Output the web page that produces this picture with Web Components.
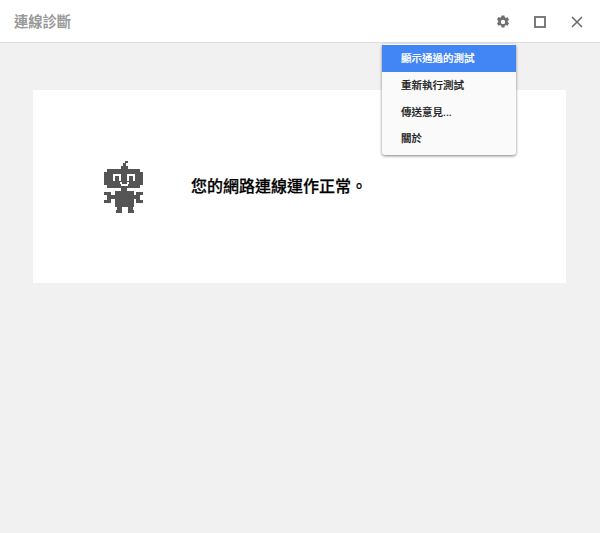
<!DOCTYPE html>
<html><head><meta charset="utf-8">
<style>
html,body{margin:0;height:100%;background:#f1f1f1}
body{font-family:"Liberation Sans","Noto Sans CJK TC",sans-serif;width:600px;height:533px;overflow:hidden;position:relative}
</style></head><body>
<diag-app></diag-app>
<template id="t-app">
<style>
:host{display:flex;flex-direction:column;width:600px;height:533px;background:#f1f1f1;position:relative}
main{padding:47px 34px 0 33px}
</style>
<diag-header></diag-header>
<main><diag-card>您的網路連線運作正常。</diag-card></main>
<diag-menu></diag-menu>
</template>
<template id="t-header">
<style>
:host{display:flex;align-items:center;height:42px;background:#fff;border-bottom:1px solid #dcdcdc;box-sizing:content-box}
h1{margin:2px 0 0 14px;font-size:14.25px;font-weight:700;color:#999;flex:1;line-height:42px;font-family:inherit}
svg{display:block}
.btns{display:flex;gap:21px;padding-right:15px;padding-top:1px;align-items:center}
</style>
<h1>連線診斷</h1>
<div class="btns">
<svg width="16" height="16" viewBox="0 0 16 16"><path fill="#6e6e6e" fill-rule="evenodd" d="M6.6 1.6h2.8l.4 1.7 1.1.6 1.7-.6 1.4 2.4-1.3 1.2v1.2l1.3 1.2-1.4 2.4-1.7-.6-1.1.6-.4 1.7H6.6l-.4-1.7-1.1-.6-1.7.6-1.4-2.4 1.3-1.2V6.7L2 5.5l1.4-2.4 1.7.6 1.1-.6zM8 5.8a2.2 2.2 0 1 0 0 4.4 2.2 2.2 0 0 0 0-4.4z"/></svg>
<svg width="16" height="16" viewBox="0 0 16 16"><rect x="3" y="3" width="10" height="10" fill="none" stroke="#6e6e6e" stroke-width="1.8"/></svg>
<svg width="16" height="16" viewBox="0 0 16 16"><path d="M3 3l10 10M13 3L3 13" fill="none" stroke="#6e6e6e" stroke-width="1.6"/></svg>
</div>
</template>
<template id="t-card">
<style>
:host{display:flex;align-items:center;height:193px;background:#fff;padding-left:70px;box-sizing:border-box}
p{margin:0 0 3px 46px;font-size:16px;font-weight:500;color:#000;-webkit-text-stroke:.25px #000}
svg{display:block;flex:none}
</style>
<svg width="42" height="54" viewBox="0 0 42 54" shape-rendering="crispEdges" fill="#555">
<rect x="22" y="1" width="3" height="2"/><rect x="20" y="3" width="3" height="3"/><rect x="18" y="6" width="7" height="3"/>
<rect x="4" y="9" width="33" height="19"/><rect x="1" y="12" width="3" height="13"/><rect x="37" y="12" width="3" height="13"/>
<path fill="#fff" fill-rule="evenodd" d="M10 14h8v7h-2v-5h-4v5h-2zM24 14h8v7h-2v-5h-4v5h-2zM17 22h2v2h5v-2h2v2h-1v2h-7v-2h-1z"/>
<rect x="18" y="28" width="6" height="3"/><rect x="12" y="31" width="19" height="16"/>
<rect x="1" y="32" width="7" height="3"/><rect x="4" y="35" width="4" height="5"/><rect x="8" y="35" width="4" height="4"/><rect x="1" y="40" width="7" height="3"/>
<rect x="33" y="32" width="7" height="3"/><rect x="33" y="35" width="4" height="5"/><rect x="31" y="35" width="2" height="4"/><rect x="33" y="40" width="7" height="3"/>
<rect x="14" y="47" width="5" height="4"/><rect x="25" y="47" width="5" height="4"/>
<rect x="13" y="50" width="6" height="3"/><rect x="25" y="50" width="6" height="3"/>
</svg>
<p><slot></slot></p>
</template>
<template id="t-menu">
<style>
:host{position:absolute;left:382px;top:44px;width:134px;height:111px;background:#fafafa;border-radius:3px;box-shadow:0 1px 3px rgba(0,0,0,.5);display:flex;flex-direction:column;box-sizing:border-box;padding-top:1px;font-size:10.5px;font-weight:500;color:#222;-webkit-text-stroke:.2px currentColor}
div{height:26.7px;line-height:26.7px;padding-left:19px}
.on{background:#4285f4;color:#fff;height:27px}
</style>
<div class="on">顯示通過的測試</div>
<div>重新執行測試</div>
<div>傳送意見...</div>
<div>關於</div>
</template>
<script>
function def(n,id){customElements.define(n,class extends HTMLElement{constructor(){super();this.attachShadow({mode:'open'}).appendChild(document.getElementById(id).content.cloneNode(true))}})}
def('diag-header','t-header');def('diag-card','t-card');def('diag-menu','t-menu');def('diag-app','t-app');
</script>
</body></html>
